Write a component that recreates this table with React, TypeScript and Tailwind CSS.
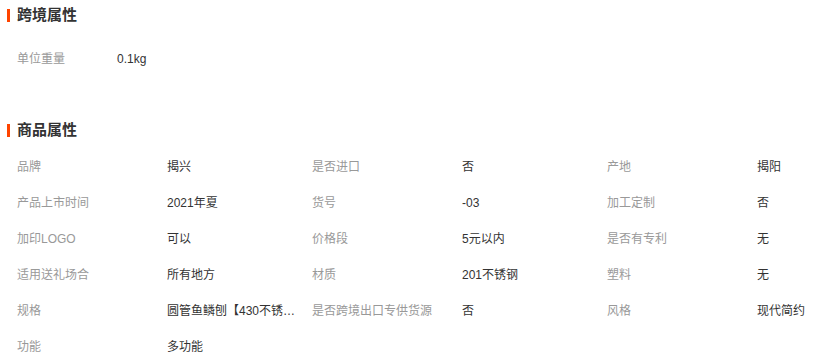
import React from "react";

const rows: [string, string][][] = [
  [["品牌", "揭兴"], ["是否进口", "否"], ["产地", "揭阳"]],
  [["产品上市时间", "2021年夏"], ["货号", "-03"], ["加工定制", "否"]],
  [["加印LOGO", "可以"], ["价格段", "5元以内"], ["是否有专利", "无"]],
  [["适用送礼场合", "所有地方"], ["材质", "201不锈钢"], ["塑料", "无"]],
  [["规格", "圆管鱼鳞刨【430不锈钢】"], ["是否跨境出口专供货源", "否"], ["风格", "现代简约"]],
  [["功能", "多功能"]],
];

function Title({ text }: { text: string }) {
  return (
    <div className="flex h-[30px] items-center">
      <div className="ml-[7px] h-[13px] w-[3px] bg-[#ff4400]" />
      <div className="ml-[7px] text-[15px] font-bold leading-[20px] text-[#333]">{text}</div>
    </div>
  );
}

export default function App() {
  return (
    <div
      className="h-[361px] w-[824px] overflow-hidden bg-white"
      style={{ fontFamily: '"Liberation Sans", "Noto Sans CJK SC", sans-serif' }}
    >
      <Title text="跨境属性" />
      <div className="pt-[11px]">
        <div className="flex h-[36px] items-center pl-[17px] text-[12px]">
          <div className="w-[100px] text-[#999]">单位重量</div>
          <div className="text-[#333]">0.1kg</div>
        </div>
      </div>
      <div className="mt-[38px]">
        <Title text="商品属性" />
      </div>
      <div className="pt-[4px] pl-[17px]">
        {rows.map((r, i) => (
          <div key={i} className="flex h-[36px] items-center text-[12px]">
            {r.map(([k, v], j) => (
              <div key={j} className="flex shrink-0 items-center">
                <div className="w-[150px] shrink-0 text-[#999]">{k}</div>
                <div className="w-[145px] shrink-0 text-[#333]">
                  <div className="max-w-[131px] truncate">{v}</div>
                </div>
              </div>
            ))}
          </div>
        ))}
      </div>
    </div>
  );
}
